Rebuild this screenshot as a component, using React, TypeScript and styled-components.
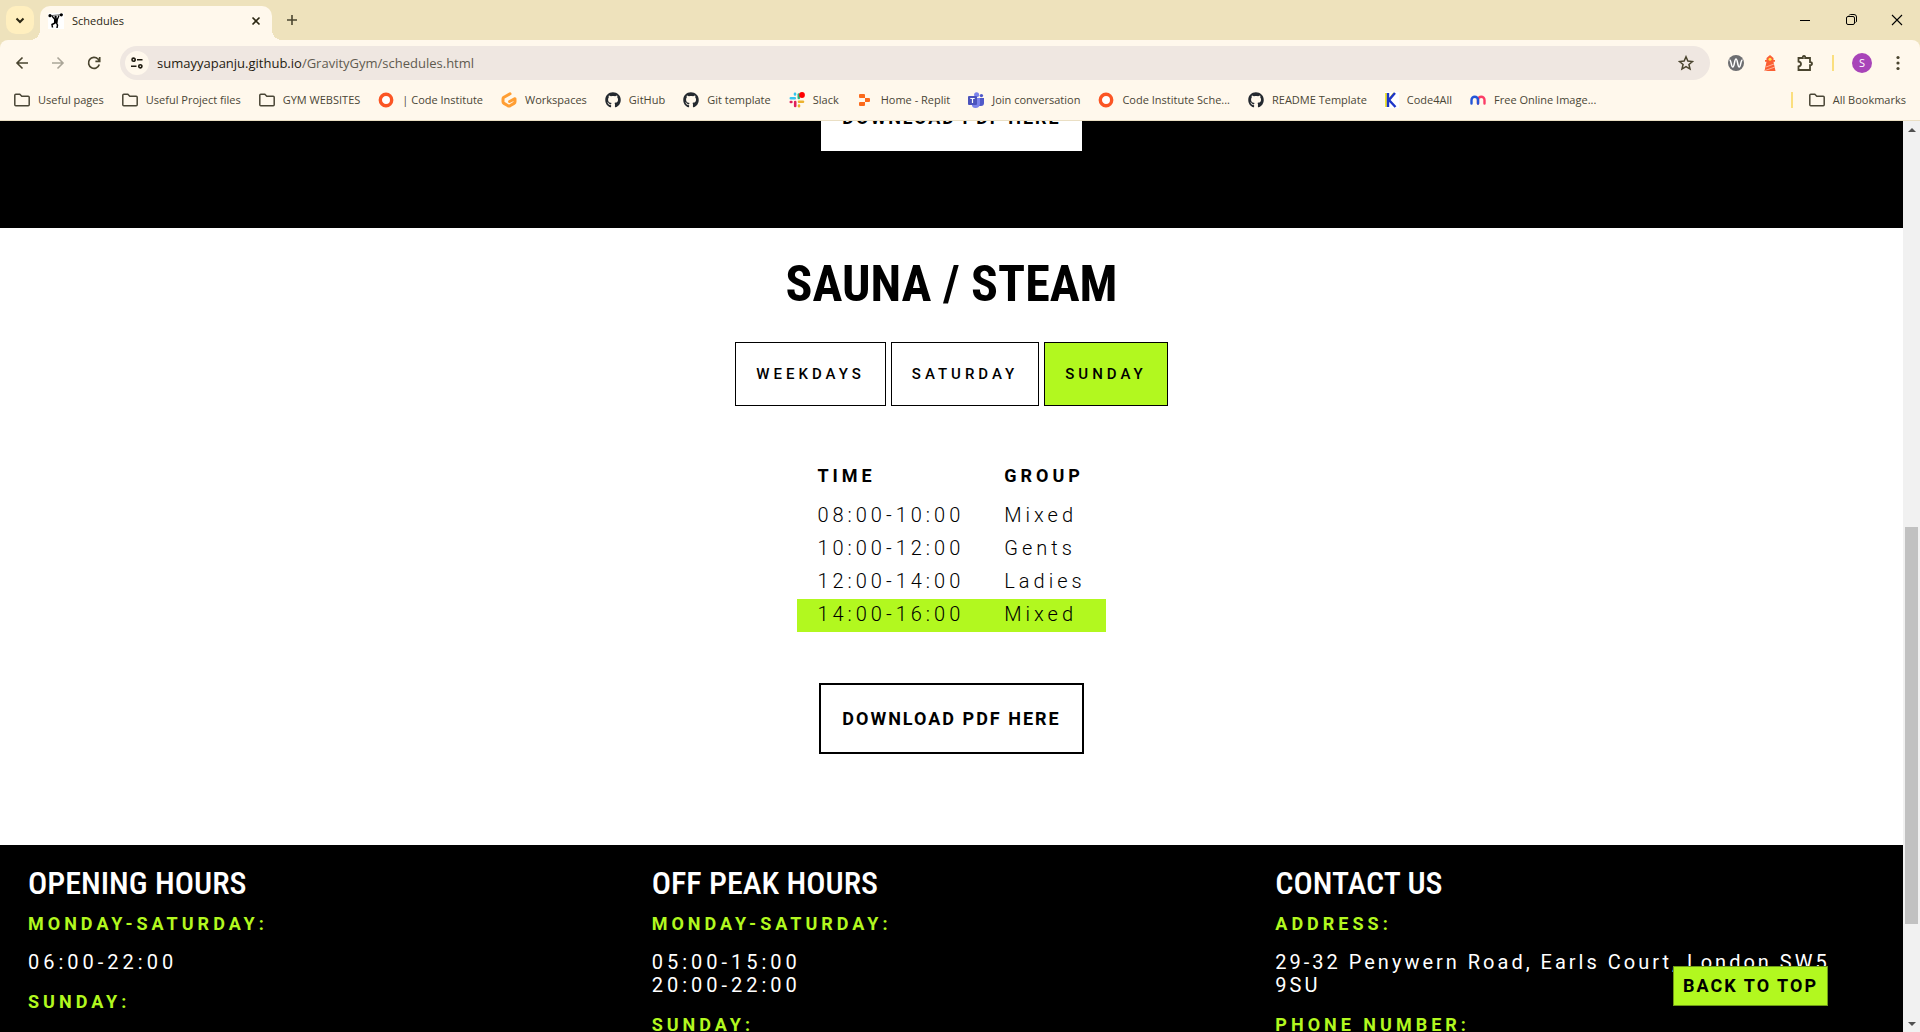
import React from 'react';
import styled, { createGlobalStyle } from 'styled-components';
import { FaGithub } from 'react-icons/fa';

const ui = '"Open Sans", "Noto Sans", sans-serif';
const body = 'Roboto, "Liberation Sans", sans-serif';
const display = '"Roboto Condensed", Roboto, sans-serif';
const lime = '#b2f81f';

const Global = createGlobalStyle`
  * { box-sizing: border-box; }
  body { margin: 0; overflow: hidden; font-family: ${body}; color: #000; background: #fff; }
  button { font: inherit; color: inherit; cursor: pointer; }
  a { color: inherit; text-decoration: none; }
  h2, h3, h4, p { margin: 0; }
`;

const Window = styled.div`
  display: flex;
  flex-direction: column;
  height: 100vh;
`;

/* ---------- browser frame ---------- */
const TabStrip = styled.header`
  display: flex;
  align-items: flex-end;
  flex: none;
  height: 40px;
  padding-left: 6px;
  background: #eee2bc;
  font: 11px/16px ${ui};
  color: #2b2712;
`;
const PlainButton = styled.button`
  display: flex;
  align-items: center;
  justify-content: center;
  padding: 0;
  border: 0;
  background: none;
  color: #4a452f;
`;
const TabSearch = styled(PlainButton)`
  width: 28px;
  height: 28px;
  margin-bottom: 6px;
  border-radius: 10px;
  background: #ffefbf;
  color: #2b2712;
`;
const Tab = styled.div`
  position: relative;
  display: flex;
  align-items: center;
  gap: 8px;
  width: 232px;
  height: 34px;
  margin-left: 6px;
  padding: 0 8px 5px;
  border-radius: 10px 10px 0 0;
  background: #fff8ec;
  &::before, &::after {
    content: '';
    position: absolute;
    bottom: 0;
    width: 10px;
    height: 10px;
  }
  &::before { left: -10px; background: radial-gradient(circle at 0 0, transparent 10px, #fff8ec 10px); }
  &::after { right: -10px; background: radial-gradient(circle at 100% 0, transparent 10px, #fff8ec 10px); }
`;
const TabTitle = styled.span`
  flex: 1;
`;
const CloseTab = styled(PlainButton)`
  color: #2b2712;
`;
const NewTab = styled(PlainButton)`
  width: 28px;
  height: 28px;
  margin: 0 0 6px 6px;
`;
const WindowControls = styled.div`
  display: flex;
  margin-left: auto;
  height: 40px;
`;
const WindowButton = styled(PlainButton)`
  width: 46px;
  color: #000;
`;
const ToolbarWrap = styled.div`
  flex: none;
  background: #eee2bc;
`;
const Toolbar = styled.div`
  display: flex;
  align-items: center;
  height: 46px;
  padding: 0 14px 0 8px;
  border-radius: 8px 8px 0 0;
  background: #fff8ec;
`;
const ToolButton = styled(PlainButton)<{ $dim?: boolean }>`
  width: 28px;
  height: 28px;
  margin-right: 8px;
  color: ${p => (p.$dim ? '#aba698' : '#4a452f')};
`;
const AddressBar = styled.div`
  display: flex;
  align-items: center;
  flex: 1;
  height: 34px;
  margin: 0 18px 0 4px;
  padding: 0 16px 0 5px;
  border-radius: 17px;
  background: #efe7e1;
`;
const SiteInfo = styled(PlainButton)`
  flex: none;
  width: 24px;
  height: 24px;
  border-radius: 50%;
  background: #fff8ec;
  color: #1f1b10;
`;
const Url = styled.div`
  flex: 1;
  padding-left: 8px;
  font: 13px/20px ${ui};
  color: #1f1b10;
`;
const UrlPath = styled.span`
  color: #5f5b50;
`;
const Extensions = styled.div`
  display: flex;
  align-items: center;
  gap: 18px;
  color: #4a452f;
`;
const Divider = styled.span`
  width: 2px;
  height: 16px;
  background: #fbdf7e;
`;
const Avatar = styled.button`
  width: 20px;
  height: 20px;
  padding: 0;
  border: 0;
  border-radius: 50%;
  background: #a844b8;
  color: #fff;
  font: 11px/20px ${ui};
`;
const BookmarkBar = styled.nav`
  display: flex;
  align-items: center;
  flex: none;
  gap: 18px;
  height: 35px;
  padding: 0 14px 7px;
  border-bottom: 1px solid #eadfc4;
  background: #fff8ec;
  font: 11px/16px ${ui};
  color: #4a4636;
  white-space: nowrap;
`;
const Bookmark = styled.a`
  display: flex;
  align-items: center;
  gap: 8px;
`;
const AllBookmarks = styled.div`
  display: flex;
  align-items: center;
  gap: 16px;
  margin-left: auto;
`;

/* ---------- page ---------- */
const Viewport = styled.div`
  display: flex;
  flex: 1;
  min-height: 0;
`;
const Page = styled.main`
  flex: 1;
  height: 100%;
  overflow: hidden;
`;
const ClassesSection = styled.section`
  display: flex;
  flex-direction: column;
  align-items: center;
  justify-content: flex-end;
  height: 107px;
  padding-bottom: 75px;
  overflow: hidden;
  background: #000;
`;
const SaunaSection = styled.section`
  display: flex;
  flex-direction: column;
  align-items: center;
  padding: 20px 0 91px;
  background: #fff;
`;
const Title = styled.h2`
  font: bold 50px/72px ${display};
`;
const DayTabs = styled.div`
  display: flex;
  gap: 5px;
  margin-top: 22px;
`;
const DayTab = styled.button<{ $active?: boolean }>`
  height: 64px;
  padding: 0 20px;
  border: 1px solid #000;
  background: ${p => (p.$active ? lime : '#fff')};
  font: 500 15px/20px ${body};
  letter-spacing: 4px;
`;
const Schedule = styled.table`
  margin-top: 46px;
  border-collapse: collapse;
  font: 300 20px/24px ${body};
  letter-spacing: 4px;
  text-align: left;
`;
const Head = styled.th`
  height: 48px;
  padding: 0 20px;
  font: bold 18px/24px ${body};
  letter-spacing: 4px;
`;
const Row = styled.tr<{ $highlight?: boolean }>`
  background: ${p => (p.$highlight ? lime : 'transparent')};
`;
const Cell = styled.td`
  height: 33px;
  padding: 0 20px 3px;
`;
const Download = styled.a`
  flex: none;
  padding: 23px 21px 22px;
  border: 2px solid #000;
  background: #fff;
  font: bold 18px/22px ${body};
  letter-spacing: 2px;
`;
const ScheduleDownload = styled(Download)`
  margin-top: 51px;
`;
const Footer = styled.footer`
  display: grid;
  grid-template-columns: repeat(3, 1fr);
  gap: 24px;
  padding: 20px 28px;
  background: #000;
  color: #fff;
`;
const FooterTitle = styled.h3`
  font: 500 32px/36px ${display};
`;
const FooterLabel = styled.h4`
  padding: 12px 0 16px;
  font: bold 18px/22px ${body};
  letter-spacing: 4px;
  color: ${lime};
`;
const FooterText = styled.p`
  margin-bottom: 5px;
  font: 20px/23px ${body};
  letter-spacing: 3px;
`;
const Hours = styled(FooterText)`
  letter-spacing: 4px;
`;
const BackToTop = styled.a`
  position: fixed;
  right: 92px;
  bottom: 26px;
  padding: 7px 9px;
  border: 1px solid #6f9a16;
  background: ${lime};
  color: #000;
  font: bold 18px/24px ${body};
  letter-spacing: 2px;
`;
const Scrollbar = styled.div`
  display: flex;
  flex-direction: column;
  width: 17px;
  padding: 0 2px;
  background: #f1f1f1;
`;
const ScrollArrow = styled(PlainButton)`
  flex: none;
  height: 17px;
  color: #505050;
`;
const ScrollTrack = styled.div`
  display: grid;
  flex: 1;
  grid-template-rows: 389fr 397fr 91fr;
`;
const ScrollThumb = styled.div`
  grid-row: 2;
  background: #c1c1c1;
`;

/* ---------- icons ---------- */
const Line = ({ d, size = 16, w = 2, box = 16 }: { d: string; size?: number; w?: number; box?: number }) => (
  <svg width={size} height={size} viewBox={`0 0 ${box} ${box}`} fill="none" stroke="currentColor" strokeWidth={w}>
    <path d={d} />
  </svg>
);
const Folder = () => <Line w={1.5} d="M.8 3.200q0-1 1-1h4l2 2h6.400q1 0 1 1v7.600q0 1-1 1H1.800q-1 0-1-1z" />;
const Ring = () => (
  <svg width="16" height="16" viewBox="0 0 16 16"><circle cx="8" cy="8" r="5.700" fill="#fff" stroke="#fb5524" strokeWidth="3.400" /></svg>
);
const Gitpod = () => (
  <svg width="16" height="16" viewBox="0 0 16 16" fill="none" stroke="#ff9e33" strokeWidth="3" strokeLinecap="round" strokeLinejoin="round">
    <path d="M9 1.800 3 5.200q-1 .5-1 1.600v3q0 1 1 1.600l4 2.400q1 .5 2 0l4-2.400q1-.6 1-1.600V6.700L8.600 9.500" />
  </svg>
);
const Slack = () => (
  <svg width="16" height="16" viewBox="0 0 16 16" strokeWidth="2.600" strokeLinecap="round">
    <path d="M1.800 6.200h4M6 1.800v.6" stroke="#36c5f0" /><path d="M9.800 6V2.500" stroke="#2eb67d" />
    <path d="M1.800 10h.6M6.200 10v4" stroke="#e01e5a" /><path d="M10 9.800h4M10 13.600v.6" stroke="#ecb22e" />
    <circle cx="13" cy="3" r="2.900" fill="#f00" />
  </svg>
);
const Replit = () => (
  <svg width="16" height="16" viewBox="0 0 16 16" fill="#fb6a1c">
    <path d="M3 2h4q1 0 1 1v3H3Q2 6 2 5V3q0-1 1-1zM8 6h4q1 0 1 1v2q0 1-1 1H8zM3 10h5v3q0 1-1 1H3q-1 0-1-1v-2q0-1 1-1z" />
  </svg>
);
const Teams = () => (
  <svg width="16" height="16" viewBox="0 0 16 16">
    <circle cx="8.600" cy="2.800" r="2.500" fill="#7b83eb" /><circle cx="13.400" cy="3.600" r="1.700" fill="#5059c9" />
    <path d="M11 6h5v5q0 3-3 3h-2z" fill="#5059c9" /><path d="M4 6h8v6q-.5 4-4.500 4T4 12z" fill="#7b83eb" />
    <rect y="4" width="9" height="9" rx="1" fill="#4b53bc" /><path d="M2.300 6.500h4.400M4.500 6.500v4.500" stroke="#fff" strokeWidth="1.200" />
  </svg>
);
const KLogo = () => (
  <svg width="14" height="16" viewBox="0 0 14 16" fill="none">
    <path d="M0 0h14v16H0z" fill="#fff" /><path d="M1 1v14M9 1 3.500 8" stroke="#f1e531" strokeWidth="2" />
    <path d="M3 1v14M10 1 4 8l6.500 7" stroke="#1c35c9" strokeWidth="2.400" />
  </svg>
);
const MLogo = () => (
  <svg width="16" height="16" viewBox="0 0 16 16" fill="none" strokeWidth="2.400" strokeLinecap="round">
    <path d="M8 11.500V8a3 3 0 0 1 6.500 0v3.500" stroke="#fb3c66" /><path d="M1.500 11.500V8A3 3 0 0 1 8 8v3.500" stroke="#2355d8" />
  </svg>
);
const Lifter = () => (
  <svg width="16" height="16" viewBox="0 0 16 16" fill="none" stroke="#000">
    <path d="M0 0h16v16H0z" fill="#fff" stroke="none" />
    <path d="M1 2.800 14.500 1.500" strokeWidth=".6" />
    <circle cx="2" cy="2.700" r="1.600" fill="#000" stroke="none" /><circle cx="13.300" cy="1.800" r="1.600" fill="#000" stroke="none" />
    <path d="m4 3 2.500 3h3L11 2.500" strokeWidth="1.300" /><circle cx="7.600" cy="4" r="1.200" fill="#000" stroke="none" />
    <path d="M6.500 6h3L9 10H6.500z" fill="#000" /><path d="M7 10 4 11.500l.5 3M8.500 10l1 2-.5 3" strokeWidth="1.500" />
  </svg>
);

const bookmarks: [React.ReactNode, string][] = [
  [<Folder />, 'Useful pages'],
  [<Folder />, 'Useful Project files'],
  [<Folder />, 'GYM WEBSITES'],
  [<Ring />, '| Code Institute'],
  [<Gitpod />, 'Workspaces'],
  [<FaGithub size={16} color="#24292f" />, 'GitHub'],
  [<FaGithub size={16} color="#24292f" />, 'Git template'],
  [<Slack />, 'Slack'],
  [<Replit />, 'Home - Replit'],
  [<Teams />, 'Join conversation'],
  [<Ring />, 'Code Institute Sche...'],
  [<FaGithub size={16} color="#24292f" />, 'README Template'],
  [<KLogo />, 'Code4All'],
  [<MLogo />, 'Free Online Image...'],
];
const slots = [
  ['08:00-10:00', 'Mixed'],
  ['10:00-12:00', 'Gents'],
  ['12:00-14:00', 'Ladies'],
  ['14:00-16:00', 'Mixed'],
];

export default function App() {
  const [day, setDay] = React.useState('SUNDAY');
  return (
    <Window>
      <Global />
      <TabStrip>
        <TabSearch aria-label="Search tabs"><Line d="m4.500 6.500 3.500 3.500 3.500-3.500" /></TabSearch>
        <Tab>
          <Lifter />
          <TabTitle>Schedules</TabTitle>
          <CloseTab aria-label="Close tab"><Line w={1.6} d="m4.500 4.500 7 7m0-7-7 7" /></CloseTab>
        </Tab>
        <NewTab aria-label="New tab"><Line w={1.6} d="M8 3v10M3 8h10" /></NewTab>
        <WindowControls>
          <WindowButton aria-label="Minimize"><Line w={1} d="M3 8.500h10" /></WindowButton>
          <WindowButton aria-label="Restore"><Line w={1} d="M3.500 6q0-1.500 1.500-1.500h5q1.500 0 1.500 1.500v5q0 1.500-1.500 1.500H5q-1.500 0-1.500-1.500zM6 3.500q.5-1 1.500-1H11q2.500 0 2.500 2.500v4q0 1-1 1.500" /></WindowButton>
          <WindowButton aria-label="Close"><Line w={1.1} d="m3 3 10 10m0-10L3 13" /></WindowButton>
        </WindowControls>
      </TabStrip>
      <ToolbarWrap>
        <Toolbar>
          <ToolButton aria-label="Back"><Line w={1.6} d="M14 8H3m5.500-5.500L3 8l5.500 5.500" /></ToolButton>
          <ToolButton aria-label="Forward" $dim><Line w={1.6} d="M2 8h11M7.500 2.500 13 8l-5.500 5.500" /></ToolButton>
          <ToolButton aria-label="Reload"><Line w={1.7} d="M13.300 9.500A5.500 5.500 0 1 1 12 4l1.500 1.700M13.700 2v4.300H9.400" /></ToolButton>
          <AddressBar>
            <SiteInfo aria-label="Site information"><Line w={1.6} d="M3 4.700a1.600 1.600 0 1 0 3.200 0 1.600 1.600 0 1 0-3.200 0M8 4.700h5.500M2 11.300h5.500M9.700 11.300a1.600 1.600 0 1 0 3.200 0 1.600 1.600 0 1 0-3.200 0" /></SiteInfo>
            <Url>sumayyapanju.github.io<UrlPath>/GravityGym/schedules.html</UrlPath></Url>
            <PlainButton aria-label="Bookmark this page">
              <Line w={1.7} size={16} box={18} d="m9 2 2.100 4.800 5.200.5-4 3.400 1.200 5.100L9 13.100l-4.500 2.700 1.200-5.100-4-3.400 5.200-.5z" />
            </PlainButton>
          </AddressBar>
          <Extensions>
            <svg width="16" height="16" viewBox="0 0 16 16" fill="none">
              <circle cx="8" cy="8" r="8" fill="#6d6e71" />
              <path d="M1.500 5c2 0 1.500 7 3.300 7S6.300 4 8 4s1.500 8 3.200 8S12.500 5 14.500 5" stroke="#fff" strokeWidth="1.500" />
            </svg>
            <svg width="16" height="16" viewBox="0 0 16 16">
              <path d="M4.500 3 8 0l3.500 3v2H13v1.800h-1.500L13.500 16h-11L4.500 6.800H3V5h1.500z" fill="#fb5f33" />
              <circle cx="8" cy="4.300" r="1.500" fill="#ffe14a" /><path d="m4 12 8-3M3 15.500l10-3.500" stroke="#ffb199" />
            </svg>
            <Line w={1.8} size={18} box={18} d="M2.500 4h4.300q-.3-2 1.200-2t1.200 2H14v4.200q2 0 2 1.500T14 11.200V16H2.500v-3.500Q5 12 5 10T2.500 7.500z" />
            <Divider />
            <Avatar aria-label="Profile">S</Avatar>
            <svg width="16" height="16" viewBox="0 0 16 16" fill="currentColor"><circle cx="8" cy="2.500" r="1.600" /><circle cx="8" cy="8" r="1.600" /><circle cx="8" cy="13.500" r="1.600" /></svg>
          </Extensions>
        </Toolbar>
      </ToolbarWrap>
      <BookmarkBar>
        {bookmarks.map(([icon, label]) => (
          <Bookmark href="#" key={label}>{icon}{label}</Bookmark>
        ))}
        <AllBookmarks><Divider /><Bookmark href="#"><Folder />All Bookmarks</Bookmark></AllBookmarks>
      </BookmarkBar>
      <Viewport>
        <Page>
          <ClassesSection><Download href="#">DOWNLOAD PDF HERE</Download></ClassesSection>
          <SaunaSection>
            <Title>SAUNA / STEAM</Title>
            <DayTabs>
              {['WEEKDAYS', 'SATURDAY', 'SUNDAY'].map(name => (
                <DayTab key={name} $active={name === day} onClick={() => setDay(name)}>{name}</DayTab>
              ))}
            </DayTabs>
            <Schedule>
              <thead><tr><Head>TIME</Head><Head>GROUP</Head></tr></thead>
              <tbody>
                {slots.map(([time, group], i) => (
                  <Row key={time} $highlight={i === 3}><Cell>{time}</Cell><Cell>{group}</Cell></Row>
                ))}
              </tbody>
            </Schedule>
            <ScheduleDownload href="#">DOWNLOAD PDF HERE</ScheduleDownload>
          </SaunaSection>
          <Footer>
            <div>
              <FooterTitle>OPENING HOURS</FooterTitle>
              <FooterLabel>MONDAY-SATURDAY:</FooterLabel>
              <Hours>06:00-22:00</Hours>
              <FooterLabel>SUNDAY:</FooterLabel>
            </div>
            <div>
              <FooterTitle>OFF PEAK HOURS</FooterTitle>
              <FooterLabel>MONDAY-SATURDAY:</FooterLabel>
              <Hours>05:00-15:00<br />20:00-22:00</Hours>
              <FooterLabel>SUNDAY:</FooterLabel>
            </div>
            <div>
              <FooterTitle>CONTACT US</FooterTitle>
              <FooterLabel>ADDRESS:</FooterLabel>
              <FooterText>29-32 Penywern Road, Earls Court, London SW5 9SU</FooterText>
              <FooterLabel>PHONE NUMBER:</FooterLabel>
            </div>
          </Footer>
          <BackToTop href="#">BACK TO TOP</BackToTop>
        </Page>
        <Scrollbar>
          <ScrollArrow aria-label="Scroll up"><svg width="8" height="4" viewBox="0 0 8 4" fill="currentColor"><path d="m0 4 4-4 4 4z" /></svg></ScrollArrow>
          <ScrollTrack><ScrollThumb /></ScrollTrack>
          <ScrollArrow aria-label="Scroll down"><svg width="8" height="4" viewBox="0 0 8 4" fill="currentColor"><path d="m0 0 4 4 4-4z" /></svg></ScrollArrow>
        </Scrollbar>
      </Viewport>
    </Window>
  );
}
